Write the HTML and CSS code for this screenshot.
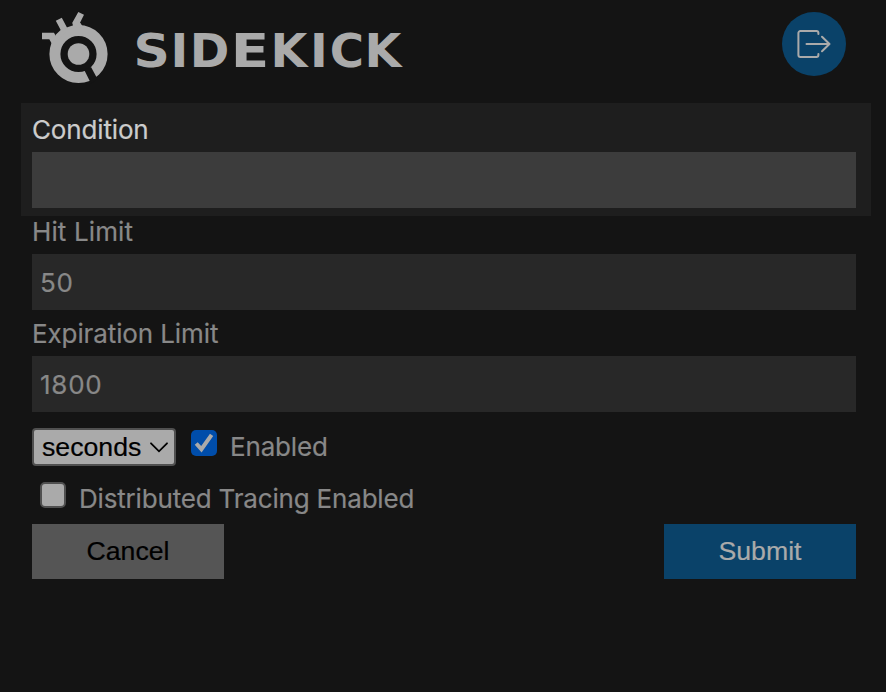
FILE: index.html
```html
<!DOCTYPE html>
<html lang="en">
<head>
<meta charset="utf-8">
<title>Sidekick</title>
<link rel="stylesheet" href="styles.css">
</head>
<body>
<header class="header">
  <svg class="logo" width="366" height="76" viewBox="40 10 366 76" role="img" aria-label="Sidekick">
    <circle cx="78.5" cy="54" r="23.6" fill="none" stroke="#aaa" stroke-width="11"/>
    <circle cx="78.5" cy="54" r="10.8" fill="#aaa"/>
    <path fill="#141414" d="M84 69.5 91 67l6.5 12-6.5 4.5z"/>
    <path fill="#aaa" d="M42 32.7h12l2.2 4 4-5L52 44l-2.7-4.8H42zM55.8 20.7l6-3 5.3 10-5.5 4zM78.3 12l5.7 2.8-4 8 3 4.2-9.5 1-1.2-5.2z"/>
    <path fill="#aaa" d="M55.2 35.2 63 27.8l4 3.2-9 9zM72.7 22.7h7.3l3 4.2-9 1.4z"/>
    <g class="wordmark">
      <text x="133.5" y="67.2" textLength="36.3" lengthAdjust="spacingAndGlyphs">S</text>
      <text x="170.6" y="67.2" textLength="17.8" lengthAdjust="spacingAndGlyphs">I</text>
      <text x="189.8" y="67.2" textLength="39.6" lengthAdjust="spacingAndGlyphs">D</text>
      <text x="230.8" y="67.2" textLength="38.5" lengthAdjust="spacingAndGlyphs">E</text>
      <text x="270.6" y="67.2" textLength="36.9" lengthAdjust="spacingAndGlyphs">K</text>
      <text x="309.9" y="67.2" textLength="17.8" lengthAdjust="spacingAndGlyphs">I</text>
      <text x="329.7" y="67.2" textLength="34.3" lengthAdjust="spacingAndGlyphs">C</text>
      <text x="364.6" y="67.2" textLength="36.9" lengthAdjust="spacingAndGlyphs">K</text>
    </g>
  </svg>
  <button class="logout" aria-label="Log out">
    <svg width="36" height="32" viewBox="0 0 36 32" fill="none" stroke="#aaa" stroke-width="2" stroke-linecap="round" stroke-linejoin="round">
      <path d="M22.4 6V5a2 2 0 0 0-2-2H4.4a2 2 0 0 0-2 2v22a2 2 0 0 0 2 2h16a2 2 0 0 0 2-2v-1M10.5 16h23M26 8.7l7.5 7.3-7.5 7.3"/>
    </svg>
  </button>
</header>
<form class="form">
  <div class="field active"><label for="condition">Condition</label><input id="condition" type="text"></div>
  <div class="field hits"><label for="hits">Hit Limit</label><input id="hits" type="text" value="50"></div>
  <div class="field"><label for="expiry">Expiration Limit</label><input id="expiry" type="text" value="1800"></div>
  <div class="options">
    <div class="select"><span>seconds</span>
      <svg width="18" height="11" viewBox="0 0 18 11" fill="none" stroke="#000" stroke-width="1.8" stroke-linecap="round"><path d="m1 1.3 8 8 8-8"/></svg>
    </div>
    <span class="box checked"><svg width="26" height="26" viewBox="0 0 26 26" fill="none" stroke="#aaa" stroke-width="4"><path d="m5.2 13.5 5.2 5.7L20.6 4.8"/></svg></span>
    <span class="option-label enabled">Enabled</span>
  </div>
  <div class="options tracing">
    <span class="box"></span>
    <span class="option-label distributed">Distributed Tracing Enabled</span>
  </div>
  <div class="actions">
    <button type="button" class="action cancel">Cancel</button>
    <button type="button" class="action submit">Submit</button>
  </div>
</form>
</body>
</html>
```
FILE: styles.css
```css
* { box-sizing: border-box; }
body {
  margin: 0;
  height: 692px;
  overflow: hidden;
  background: #141414;
  color: #888;
  font: 400 26px/32px Inter, sans-serif;
  -webkit-text-stroke: 0.2px;
}
.header {
  display: flex;
  justify-content: space-between;
  align-items: flex-start;
  height: 103px;
  padding: 10px 40px 0;
}
.logo { display: block; }
.wordmark {
  fill: #aaa;
  font: bold 45.5px "DejaVu Sans", sans-serif;
  -webkit-text-stroke: 0;
}
.logout {
  display: flex;
  align-items: center;
  justify-content: center;
  width: 64px;
  height: 64px;
  margin-top: 2px;
  padding: 0;
  border: 0;
  border-radius: 50%;
  background: #0a4269;
}
.form { padding: 0 15px 0 21px; }
.field {
  height: 102px;
  padding: 0 15px 0 11px;
}
.field label {
  display: block;
  height: 38px;
  letter-spacing: -0.11px;
}
.hits label { letter-spacing: 0.12px; }
.field input {
  display: block;
  width: 100%;
  height: 56px;
  padding: 1px 8px 0;
  border: 0;
  border-radius: 0;
  outline: 0;
  background: #282828;
  color: #888;
  font: inherit;
  letter-spacing: 0.75px;
}
.active {
  height: 113px;
  padding-top: 11px;
  background: #1e1e1e;
  color: #ccc;
}
.active label { letter-spacing: -0.15px; }
.active input { background: #3c3c3c; }
.options {
  display: flex;
  height: 52px;
  padding: 8px 0 0 11px;
}
.select {
  display: flex;
  align-items: center;
  justify-content: space-between;
  width: 144px;
  height: 38px;
  padding: 0 6px 0 8px;
  border: 2px solid #505050;
  border-radius: 4px;
  background: #aaa;
  color: #000;
  font: 26.67px/32px "Liberation Sans", Arial, sans-serif;
}
.box {
  width: 26px;
  height: 26px;
  margin: 2px 0 0 8px;
  border: 2px solid #505050;
  border-radius: 5px;
  background: #aaa;
}
.checked {
  margin-left: 15px;
  border: 0;
  background: #004daa;
}
.checked svg { display: block; }
.option-label {
  margin: 3px 0 0 13px;
  letter-spacing: -0.18px;
  white-space: nowrap;
}
.actions {
  display: flex;
  justify-content: space-between;
  padding: 0 15px 0 11px;
}
.action {
  width: 192px;
  height: 55px;
  padding: 0 0 2px;
  border: 0;
  color: #000;
  font: 26.67px/32px "Liberation Sans", Arial, sans-serif;
}
.cancel { background: #555; }
.submit { background: #0a4269; color: #aaa; }
```
